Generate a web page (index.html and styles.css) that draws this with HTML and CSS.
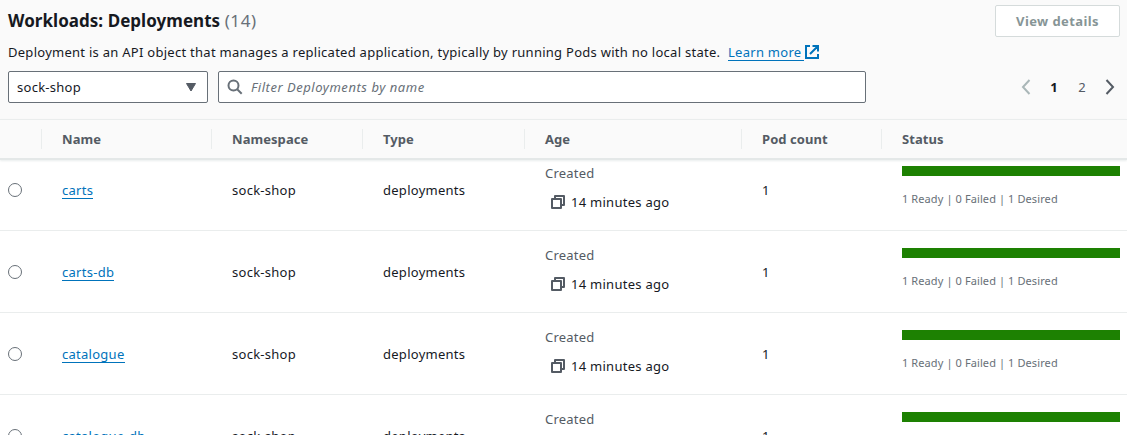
FILE: index.html
```
<!DOCTYPE html>
<html lang="en">
<head>
<meta charset="utf-8">
<title>Workloads: Deployments</title>
<link rel="stylesheet" href="styles.css">
</head>
<body>
<svg class="defs" width="0" height="0" aria-hidden="true">
  <symbol id="copy" viewBox="0 0 16 16"><path d="M2 5h9v9H2zM5 5V2h9v9h-3" fill="none" stroke="currentColor" stroke-width="2" stroke-linejoin="round"/></symbol>
</svg>
<header class="panel">
  <div class="title-row">
    <h1 class="title">Workloads: Deployments <span class="count">(14)</span></h1>
    <button class="button" disabled>View details</button>
  </div>
  <p class="description"><span class="sentence">Deployment is an API object that manages a replicated application, typically by running Pods with no local state.</span><a class="learn">Learn more</a><svg class="external" viewBox="0 0 14 14"><path d="M5 1H1v12h12V9M7.500 1H13v5.500M12.500 1.500L5 9" fill="none" stroke="currentColor" stroke-width="2"/></svg></p>
  <div class="tools">
    <div class="select"><span>sock-shop</span><svg class="caret" viewBox="0 0 10 9"><path d="M.5.500h9L5 8z" fill="currentColor" stroke="currentColor" stroke-linejoin="round"/></svg></div>
    <div class="search"><svg class="glass" viewBox="0 0 16 16"><circle cx="6.500" cy="6.500" r="5" fill="none" stroke="currentColor" stroke-width="2"/><path d="M10.200 10.200L14.700 14.700" stroke="currentColor" stroke-width="2"/></svg><span class="placeholder">Filter Deployments by name</span></div>
    <nav class="pages">
      <svg class="arrow off" viewBox="0 0 10 16"><path d="M8.500 1L2 8l6.500 7" fill="none" stroke="currentColor" stroke-width="2"/></svg>
      <span class="page current">1</span>
      <span class="page">2</span>
      <svg class="arrow" viewBox="0 0 10 16"><path d="M1.500 1L8 8l-6.500 7" fill="none" stroke="currentColor" stroke-width="2"/></svg>
    </nav>
  </div>
</header>
<main class="table">
  <div class="row head">
    <div class="th"></div><div class="th">Name</div><div class="th">Namespace</div><div class="th">Type</div><div class="th">Age</div><div class="th">Pod count</div><div class="th">Status</div>
  </div>
  <div class="body">
    <div class="row item">
      <div class="pick"><span class="radio"></span></div>
      <div class="td"><a class="link">carts</a></div><div class="td">sock-shop</div><div class="td">deployments</div>
      <div class="td age"><span class="created">Created</span><span class="time"><svg class="copy"><use href="#copy"/></svg>14 minutes ago</span></div>
      <div class="td">1</div>
      <div class="td status"><div class="bar"></div><span class="summary">1 Ready | 0 Failed | 1 Desired</span></div>
    </div>
    <div class="row item">
      <div class="pick"><span class="radio"></span></div>
      <div class="td"><a class="link">carts-db</a></div><div class="td">sock-shop</div><div class="td">deployments</div>
      <div class="td age"><span class="created">Created</span><span class="time"><svg class="copy"><use href="#copy"/></svg>14 minutes ago</span></div>
      <div class="td">1</div>
      <div class="td status"><div class="bar"></div><span class="summary">1 Ready | 0 Failed | 1 Desired</span></div>
    </div>
    <div class="row item">
      <div class="pick"><span class="radio"></span></div>
      <div class="td"><a class="link">catalogue</a></div><div class="td">sock-shop</div><div class="td">deployments</div>
      <div class="td age"><span class="created">Created</span><span class="time"><svg class="copy"><use href="#copy"/></svg>14 minutes ago</span></div>
      <div class="td">1</div>
      <div class="td status"><div class="bar"></div><span class="summary">1 Ready | 0 Failed | 1 Desired</span></div>
    </div>
    <div class="row item">
      <div class="pick"><span class="radio"></span></div>
      <div class="td"><a class="link">catalogue-db</a></div><div class="td">sock-shop</div><div class="td">deployments</div>
      <div class="td age"><span class="created">Created</span></div>
      <div class="td">1</div>
      <div class="td status"><div class="bar"></div></div>
    </div>
  </div>
</main>
</body>
</html>
```
FILE: styles.css
```
* { box-sizing: border-box; }
body {
  margin: 0;
  height: 435px;
  overflow: hidden;
  background: #fff;
  color: #16191f;
  font: 13px/20px "Noto Sans", "Open Sans", sans-serif;
  letter-spacing: 0.27px;
}
.defs { position: absolute; }
svg { display: block; flex: none; }
.panel { height: 119px; padding: 5px 7px 0 8px; background: #fafafa; }
.title-row { display: flex; justify-content: space-between; height: 37px; }
.title { margin: 5px 0 0; font-size: 17px; line-height: 22px; font-weight: 700; height: 22px; white-space: nowrap; letter-spacing: 0.04px; }
.count { color: #687078; font-weight: 400; letter-spacing: 0.6px; }
.button {
  width: 125px; height: 32px; padding: 0;
  border: 1px solid #d5dbdb; border-radius: 2px;
  background: #fff; color: #879596;
  font: 700 13px/20px "Noto Sans", sans-serif;
  letter-spacing: 0.4px;
}
.description { display: flex; align-items: center; height: 20px; margin: 0 0 9px; white-space: nowrap; }
.sentence { width: 720px; }
.learn { width: 76px; margin-right: 1px; height: 18px; line-height: 18px; color: #0073bb; border-bottom: 1px solid #0073bb; }
.external { width: 14px; height: 14px; color: #0073bb; }
.tools { display: flex; align-items: center; }
.select, .search { display: flex; flex: none; align-items: center; height: 32px; border: 1px solid #687078; border-radius: 2px; background: #fff; }
.select { width: 200px; padding: 0 11px 0 8px; justify-content: space-between; }
.caret { width: 10px; height: 9px; color: #545b64; }
.search { width: 648px; margin-left: 10px; padding-left: 8px; }
.glass { width: 16px; height: 16px; color: #687078; }
.placeholder { margin-left: 8px; font-style: italic; color: #687078; letter-spacing: 0.54px; }
.pages { display: flex; flex: none; align-items: center; margin-left: 155px; }
.arrow { width: 10px; height: 16px; color: #545b64; }
.off { color: #aab7b8; }
.page { width: 28px; text-align: center; color: #545b64; }
.off + .page { margin-left: 9px; }
.page + .arrow { margin-left: 9px; }
.current { color: #16191f; font-weight: 700; }
.row { display: grid; grid-template-columns: 42px 170px 151px 162px 217px 140px 245px; }
.head {
  position: relative; z-index: 1;
  align-items: center; height: 41px;
  border-top: 1px solid #eaeded; border-bottom: 2px solid #e4e8e8;
  background: #fafafa;
  box-shadow: 0 1px 2px #eaeded;
}
.th { height: 20px; padding-left: 20px; border-right: 1px solid #eaeded; color: #545b64; font-weight: 700; line-height: 20px; letter-spacing: 0.06px; }
.th:last-child { border: 0; }
.body { height: 286px; margin-top: -11px; overflow: hidden; }
.item { height: 82px; border-bottom: 1px solid #eaeded; align-items: center; }
.pick { padding-left: 8px; }
.radio { display: block; width: 14px; height: 14px; border: 1px solid #687078; border-radius: 50%; }
.td { padding-left: 20px; white-space: nowrap; }
.link { display: inline-block; height: 18px; line-height: 18px; color: #0073bb; border-bottom: 1px solid #0073bb; }
.age { display: grid; align-self: start; gap: 9px; padding-top: 14px; }
.created { color: #545b64; letter-spacing: 0.2px; }
.time { display: flex; align-items: center; padding-left: 5px; gap: 5px; }
.copy { width: 16px; height: 16px; color: #545b64; }
.status { align-self: start; padding-top: 17px; }
.bar { width: 218px; height: 10px; background: #1d8102; }
.summary { display: block; margin-top: 13px; color: #687078; font-size: 11px; letter-spacing: 0.1px; }
```
